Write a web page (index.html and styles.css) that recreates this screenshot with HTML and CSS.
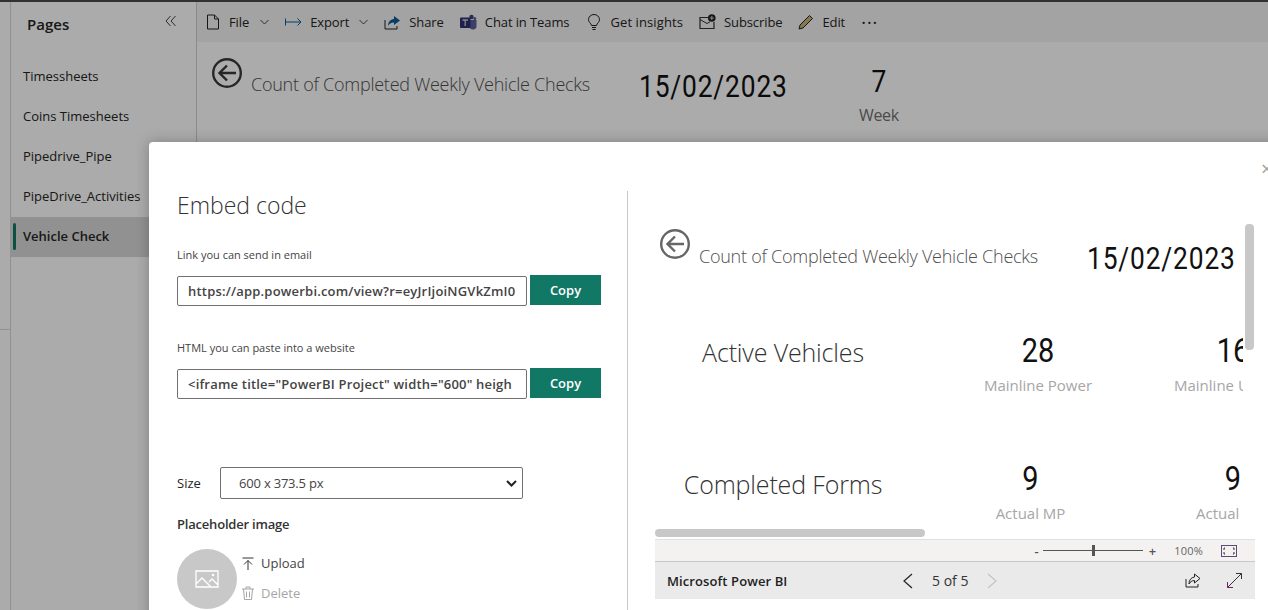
FILE: index.html

```html
<!DOCTYPE html>
<html lang="en">
<head>
  <meta charset="UTF-8" />
  <title>Vehicle Check - Power BI</title>
  <link rel="stylesheet" href="styles.css">
</head>
<body>
  <div class="app">
    <div class="rail"><div class="rail-line"></div></div>

    <aside class="pages">
      <div class="pages-head">
        <span class="pages-title">Pages</span>
        <svg class="collapse" width="12" height="12" viewBox="0 0 12 12"><path d="M5.500 1 1 6l4.500 5M10.500 1 6 6l4.500 5" fill="none" stroke="#444" stroke-width="1"/></svg>
      </div>
      <a class="page-link">Timessheets</a>
      <a class="page-link">Coins Timesheets</a>
      <a class="page-link">Pipedrive_Pipe</a>
      <a class="page-link">PipeDrive_Activities</a>
      <a class="page-link active">Vehicle Check</a>
    </aside>

    <main class="main">
      <nav class="toolbar">
        <span class="tool file">
          <svg width="14" height="16" viewBox="0 0 14 16"><path d="M1.500 1h7l4 4v10h-11zM8.500 1v4h4" fill="none" stroke="#222" stroke-width="1"/></svg>
          File <svg class="caret" width="9" height="6" viewBox="0 0 9 6"><path d="M.5 1 4.500 5l4-4" fill="none" stroke="#444"/></svg>
        </span>
        <span class="tool">
          <svg width="17" height="10" viewBox="0 0 17 10"><path d="M.5 1.500v7M1 5h15M12.500 1.500 16 5l-3.500 3.500" fill="none" stroke="#0f5a96" stroke-width="1"/></svg>
          Export <svg class="caret" width="9" height="6" viewBox="0 0 9 6"><path d="M.5 1 4.500 5l4-4" fill="none" stroke="#444"/></svg>
        </span>
        <span class="tool">
          <svg width="17" height="15" viewBox="0 0 17 15"><path d="M1 5v9h12v-3" fill="none" stroke="#222"/><path d="M10 1l6 4.500-6 4.500V7.500C7 7.500 5 9 4 11c0-4 2-6.500 6-7z" fill="#0f5a96"/></svg>
          Share
        </span>
        <span class="tool">
          <svg width="17" height="16" viewBox="0 0 17 16"><circle cx="11.500" cy="3" r="2.200" fill="#3c3f7c"/><circle cx="14.800" cy="4.500" r="1.500" fill="#5b5e9c"/><path d="M9 6h7.500v5.500a3.500 3.500 0 0 1-7 1z" fill="#5b5e9c"/><rect x="0" y="3.500" width="10.500" height="10.500" rx="1" fill="#2f3272"/><path d="M2.500 6h5.500M5.200 6v6" stroke="#ccc" stroke-width="1.300"/></svg>
          Chat in Teams
        </span>
        <span class="tool insights">
          <svg width="14" height="17" viewBox="0 0 14 17"><path d="M4.500 11.500C4 9 1.500 8.500 1.500 5.500a5.500 5 0 0 1 11 0c0 3-2.500 3.500-3 6zM5 13.500h4M5.500 15.500h3" fill="none" stroke="#222"/></svg>
          Get insights
        </span>
        <span class="tool">
          <svg width="17" height="16" viewBox="0 0 17 16"><path d="M10 3.500H1v11h14V8" fill="none" stroke="#333" stroke-width="1.200"/><path d="M1 5.500l7 4 3-1.700" fill="none" stroke="#333"/><circle cx="12.800" cy="4" r="3.800" fill="#222"/><path d="M12.800 2v4M10.800 4h4" stroke="#ccc"/></svg>
          Subscribe
        </span>
        <span class="tool">
          <svg width="16" height="16" viewBox="0 0 16 16"><path d="M11.500 1.500l3 3L5 14l-4 1 1-4z" fill="#c9b27a" stroke="#222"/></svg>
          Edit
        </span>
        <span class="tool more">···</span>
      </nav>

      <section class="report-head">
        <svg class="back" width="32" height="32" viewBox="0 0 32 32"><circle cx="16" cy="16" r="13.800" fill="none" stroke="#3a3a3a" stroke-width="2.400"/><path d="M16 8.500 8.500 16l7.500 7.500M8.500 16H25" fill="none" stroke="#3a3a3a" stroke-width="2.400"/></svg>
        <span class="report-title">Count of Completed Weekly Vehicle Checks</span>
        <span class="report-date">15/02/2023</span>
        <div class="week">
          <div class="week-num">7</div>
          <div class="week-label">Week</div>
        </div>
      </section>
    </main>
  </div>

  <div class="overlay"></div>

  <div class="modal">
    <span class="close">×</span>

    <div class="form-pane">
      <h2>Embed code</h2>

      <label class="field-label">Link you can send in email</label>
      <div class="copy-row">
        <div class="copy-input"><span>https://app.powerbi.com/view?r=eyJrIjoiNGVkZmI0</span></div>
        <button class="copy-btn">Copy</button>
      </div>

      <label class="field-label second">HTML you can paste into a website</label>
      <div class="copy-row">
        <div class="copy-input"><span>&lt;iframe title="PowerBI Project" width="600" heigh</span></div>
        <button class="copy-btn">Copy</button>
      </div>

      <div class="size-row">
        <span class="size-label">Size</span>
        <div class="size-select">
          <span>600 x 373.5 px</span>
          <svg width="11" height="7" viewBox="0 0 11 7"><path d="M1 1l4.500 4.500L10 1" fill="none" stroke="#222" stroke-width="2"/></svg>
        </div>
      </div>

      <div class="placeholder-title">Placeholder image</div>
      <div class="placeholder">
        <div class="thumb">
          <svg width="24" height="20" viewBox="0 0 24 20"><path d="M1 2h22v16H1zM1 15l6-6 9 9M14 13l3-3 6 6" fill="none" stroke="#fff" stroke-width="1.300"/><circle cx="18" cy="6" r="1.300" fill="#fff"/></svg>
        </div>
        <div class="thumb-actions">
          <span class="thumb-action">
            <svg width="12" height="13" viewBox="0 0 12 13"><path d="M.5 1h11M6 3.500V13M2 7.500l4-4 4 4" fill="none" stroke="#333"/></svg>
            Upload
          </span>
          <span class="thumb-action off">
            <svg width="12" height="14" viewBox="0 0 12 14"><path d="M0 3h12M4 3V1h4v2M1.500 3l1 10.500h7l1-10.500M4.500 5.500v6M7.500 5.500v6" fill="none" stroke="#a6a6a6"/></svg>
            Delete
          </span>
        </div>
      </div>
    </div>

    <div class="preview-pane">
      <div class="embed">
        <div class="embed-view">
          <div class="embed-clip">
            <div class="embed-head">
              <svg class="back" width="32" height="32" viewBox="0 0 32 32"><circle cx="16" cy="16" r="13.800" fill="none" stroke="#666" stroke-width="2.400"/><path d="M16 8.500 8.500 16l7.500 7.500M8.500 16H25" fill="none" stroke="#666" stroke-width="2.400"/></svg>
              <span class="report-title">Count of Completed Weekly Vehicle Checks</span>
              <span class="report-date">15/02/2023</span>
            </div>

            <div class="kpi-row first">
              <div class="kpi-name">Active Vehicles</div>
              <div class="kpi power">
                <div class="kpi-num">28</div>
                <div class="kpi-label">Mainline Power</div>
              </div>
              <div class="kpi unpowered">
                <div class="kpi-num">16</div>
                <div class="kpi-label">Mainline Unpowered</div>
              </div>
            </div>

            <div class="kpi-row">
              <div class="kpi-name">Completed Forms</div>
              <div class="kpi actual">
                <div class="kpi-num">9</div>
                <div class="kpi-label">Actual MP</div>
              </div>
              <div class="kpi actual-up">
                <div class="kpi-num">9</div>
                <div class="kpi-label">Actual</div>
              </div>
            </div>
          </div>

          <div class="scroll-y"></div>
          <div class="scroll-x"></div>
        </div>

        <div class="zoom-bar">
          <span class="zoom-sign">-</span>
          <span class="zoom-track"><span class="zoom-thumb"></span></span>
          <span class="zoom-sign plus">+</span>
          <span class="zoom-pct">100%</span>
          <svg width="16" height="12" viewBox="0 0 16 12"><rect x=".5" y=".5" width="15" height="11" fill="none" stroke="#5c4a78"/><path d="M4 3H3v2M12 3h1v2M4 9H3V7M12 9h1V7" fill="none" stroke="#333"/></svg>
        </div>

        <div class="pbi-bar">
          <span class="pbi-name">Microsoft Power BI</span>
          <div class="pager">
            <svg width="11" height="16" viewBox="0 0 11 16"><path d="M10 1 2 8l8 7" fill="none" stroke="#222" stroke-width="1.200"/></svg>
            <span>5 of 5</span>
            <svg width="11" height="16" viewBox="0 0 11 16"><path d="M1 1l8 7-8 7" fill="none" stroke="#c4c4c4" stroke-width="1.200"/></svg>
          </div>
          <div class="pbi-icons">
            <svg width="16" height="15" viewBox="0 0 16 15"><path d="M1 6v8h12v-3" fill="none" stroke="#222"/><path d="M9.500 1 15 5.500 9.500 10V7.500C7 7.500 5 9 4 11c0-4 2-6.500 5.500-7z" fill="none" stroke="#222"/></svg>
            <svg width="15" height="15" viewBox="0 0 15 15"><path d="M14.500.5l-14 14" stroke="#333"/><path d="M9 .5h5.500V6" fill="none" stroke="#333"/><path d="M6 14.500H.5V9" fill="none" stroke="#7a1f6a"/></svg>
          </div>
        </div>
      </div>
    </div>
  </div>
</body>
</html>
```

FILE: styles.css

```css
* {
  box-sizing: border-box;
}
html, body {
  margin: 0;
  height: 100%;
  overflow: hidden;
}
body {
  position: relative;
  font-family: "Open Sans", "Noto Sans", sans-serif;
  color: #252423;
  background: #fff;
}

/* page behind the dialog */
.app {
  display: flex;
  height: 610px;
  border-top: 2px solid #4a4a4a;
}
.rail {
  width: 11px;
  flex: none;
  border-right: 1px solid #d8d8d8;
  padding-top: 327px;
}
.rail-line {
  border-top: 1px solid #d8d8d8;
}
.pages {
  width: 186px;
  flex: none;
  border-right: 1px solid #d0d0d0;
}
.pages-head {
  display: flex;
  justify-content: space-between;
  align-items: flex-start;
  padding: 12px 19px 0 16px;
  height: 55px;
}
.pages-title {
  font-size: 15px;
  line-height: 20px;
  font-weight: 600;
}
.collapse {
  margin-top: 1px;
}
.page-link {
  display: block;
  height: 40px;
  line-height: 38px;
  padding-left: 12px;
  font-size: 13px;
  white-space: nowrap;
}
.page-link.active {
  position: relative;
  background: #d8d8d8;
  font-weight: 600;
}
.page-link.active::before {
  content: "";
  position: absolute;
  left: 2px;
  top: 6px;
  bottom: 7px;
  width: 3px;
  border-radius: 2px;
  background: #117865;
}

.main {
  flex: 1;
  min-width: 0;
}
.toolbar {
  display: flex;
  align-items: center;
  gap: 16px;
  height: 40px;
  padding-left: 9px;
  background: #f3f3f3;
}
.tool {
  display: flex;
  align-items: center;
  gap: 8px;
  font-size: 13px;
  letter-spacing: -.1px;
  white-space: nowrap;
}
.tool.file {
  gap: 9px;
}
.tool.insights {
  gap: 9px;
  margin-left: 2px;
  letter-spacing: .1px;
}
.caret {
  margin-left: 2px;
}
.more {
  font-size: 18px;
  letter-spacing: 1px;
}
.back {
  flex: none;
}
.report-head {
  display: flex;
  align-items: flex-start;
  padding: 15px 0 0 14px;
}
.report-title {
  margin: 15px 0 0 8px;
  font-size: 18px;
  font-weight: 300;
  letter-spacing: -.25px;
  color: #505050;
  white-space: nowrap;
}
/* the report font is a narrow DIN, squeeze Roboto to get near it */
.report-date {
  flex: none;
  width: 173px;
  margin: 11px 0 0 49px;
  font-family: Roboto, sans-serif;
  font-size: 31px;
  letter-spacing: 1px;
  color: #111;
  white-space: nowrap;
  transform: scaleX(.85);
  transform-origin: left center;
}
.week {
  margin: 6px 0 0 47px;
  text-align: center;
}
.week-num {
  font-family: Roboto, sans-serif;
  font-size: 31px;
  color: #111;
  line-height: 38px;
  transform: scaleX(.85);
}
.week-label {
  margin-top: 3px;
  font-size: 16px;
  color: #707070;
  letter-spacing: -.3px;
}

.overlay {
  position: absolute;
  inset: 0;
  background: rgba(0, 0, 0, .33);
}

/* embed dialog */
.modal {
  position: absolute;
  left: 149px;
  top: 142px;
  width: 1180px;
  height: 560px;
  display: flex;
  background: #fff;
  border-radius: 4px 0 0 0;
  box-shadow: 0 0 14px rgba(0, 0, 0, .25);
}
.close {
  position: absolute;
  left: 1112px;
  top: 15px;
  font-size: 20px;
  line-height: 24px;
  color: #a0a0a0;
}
.form-pane {
  width: 479px;
  flex: none;
  margin-top: 49px;
  padding: 0 0 0 28px;
  border-right: 1px solid #c8c8c8;
}
h2 {
  margin: -1px 0 0;
  font-size: 23px;
  line-height: 30px;
  font-weight: 300;
  color: #333;
}
.field-label {
  display: block;
  margin-top: 27px;
  font-size: 11px;
  line-height: 15px;
  color: #444;
}
.field-label.second {
  margin-top: 34px;
}
.copy-row {
  display: flex;
  align-items: flex-start;
  gap: 3px;
  margin-top: 13px;
}
.copy-input {
  width: 350px;
  height: 30px;
  margin-top: 1px;
  padding: 0 10px;
  border: 1px solid #707070;
  border-radius: 2px;
  font-size: 13px;
  font-weight: 600;
  line-height: 28px;
  letter-spacing: .2px;
  color: #444;
}
.copy-input span {
  display: block;
  overflow: hidden;
  white-space: nowrap;
}
.copy-btn {
  width: 71px;
  height: 30px;
  padding: 0;
  border: none;
  background: #117865;
  color: #fff;
  font-family: inherit;
  font-size: 13px;
  font-weight: 600;
}
.size-row {
  display: flex;
  align-items: center;
  margin-top: 68px;
}
.size-label {
  width: 43px;
  font-size: 13px;
}
.size-select {
  display: flex;
  justify-content: space-between;
  align-items: center;
  width: 303px;
  height: 32px;
  padding: 0 5px 0 18px;
  border: 1px solid #707070;
  border-radius: 2px;
  font-size: 13px;
  letter-spacing: -.2px;
  color: #444;
}
.placeholder-title {
  margin-top: 16px;
  font-size: 13px;
  font-weight: 600;
  line-height: 18px;
  letter-spacing: -.2px;
  color: #333;
}
.placeholder {
  display: flex;
  gap: 5px;
  margin-top: 16px;
}
.thumb {
  display: flex;
  align-items: center;
  justify-content: center;
  width: 60px;
  height: 60px;
  flex: none;
  border-radius: 50%;
  background: #c8c8c8;
}
.thumb-actions {
  display: flex;
  flex-direction: column;
  gap: 12px;
  padding-top: 5px;
}
.thumb-action {
  display: flex;
  align-items: center;
  gap: 7px;
  height: 18px;
  font-size: 13px;
  color: #444;
}
.thumb-action.off {
  color: #a6a6a6;
}

.preview-pane {
  flex: 1;
  padding: 80px 0 0 27px;
}
.embed {
  width: 600px;
}
.embed-view {
  position: relative;
  height: 317px;
}
.embed-clip {
  width: 588px;
  height: 100%;
  overflow: hidden;
}
.embed-head {
  display: flex;
  align-items: flex-start;
  padding: 6px 0 0 4px;
}
.embed-head .report-title {
  margin-top: 16px;
}
.embed-head .report-date {
  margin-top: 12px;
}
.kpi-row {
  display: flex;
  margin-top: 64px;
}
.kpi-row .kpi-name {
  padding-top: 8px;
}
.kpi-row.first {
  margin-top: 54px;
}
.kpi-row.first .kpi-name {
  padding-top: 4px;
}
.kpi-name {
  width: 256px;
  flex: none;
  text-align: center;
  font-size: 25px;
  font-weight: 300;
  letter-spacing: -.15px;
  color: #333;
  white-space: nowrap;
}
.kpi {
  flex: none;
  text-align: center;
  white-space: nowrap;
}
.kpi.power {
  width: 254px;
}
.kpi.unpowered {
  width: 118px;
  margin-left: 9px;
  text-align: left;
}
.kpi.actual {
  width: 239px;
}
.kpi.actual-up {
  width: 74px;
  margin-left: 46px;
  text-align: left;
}
.kpi-num {
  font-family: Roboto, sans-serif;
  font-size: 34px;
  line-height: 38px;
  color: #111;
  text-align: center;
  transform: scaleX(.85);
}
.kpi-label {
  margin-top: 6px;
  font-size: 15px;
  color: #a6a6a6;
}
.scroll-y {
  position: absolute;
  right: 1px;
  top: 2px;
  width: 9px;
  height: 126px;
  border-radius: 4px;
  background: #c8c8c8;
}
.scroll-x {
  position: absolute;
  left: 0;
  bottom: 2px;
  width: 270px;
  height: 8px;
  border-radius: 4px;
  background: #c8c8c8;
}
.zoom-bar {
  display: flex;
  align-items: center;
  justify-content: flex-end;
  gap: 4px;
  height: 23px;
  padding-right: 18px;
  background: #f3f2f1;
  border-top: 1px solid #e0e0e0;
  border-bottom: 1px solid #c8c8c8;
}
.zoom-sign {
  font-size: 13px;
  font-weight: 600;
  color: #555;
}
.zoom-sign.plus {
  margin-left: 2px;
}
.zoom-track {
  position: relative;
  width: 100px;
  height: 1px;
  background: #555;
}
.zoom-thumb {
  position: absolute;
  left: 49px;
  top: -5px;
  width: 3px;
  height: 11px;
  background: #555;
}
.zoom-pct {
  margin: 0 14px;
  font-size: 11px;
  letter-spacing: .2px;
  color: #666;
}
.pbi-bar {
  display: flex;
  align-items: center;
  height: 37px;
  padding: 0 13px 0 12px;
  background: #eaeaea;
}
.pbi-name {
  width: 235px;
  font-size: 13px;
  font-weight: 600;
  letter-spacing: .1px;
  color: #222;
}
.pager {
  display: flex;
  align-items: center;
  gap: 19px;
  font-size: 14px;
  font-weight: 500;
  color: #333;
}
.pbi-icons {
  display: flex;
  align-items: center;
  gap: 26px;
  margin-left: auto;
}
```
